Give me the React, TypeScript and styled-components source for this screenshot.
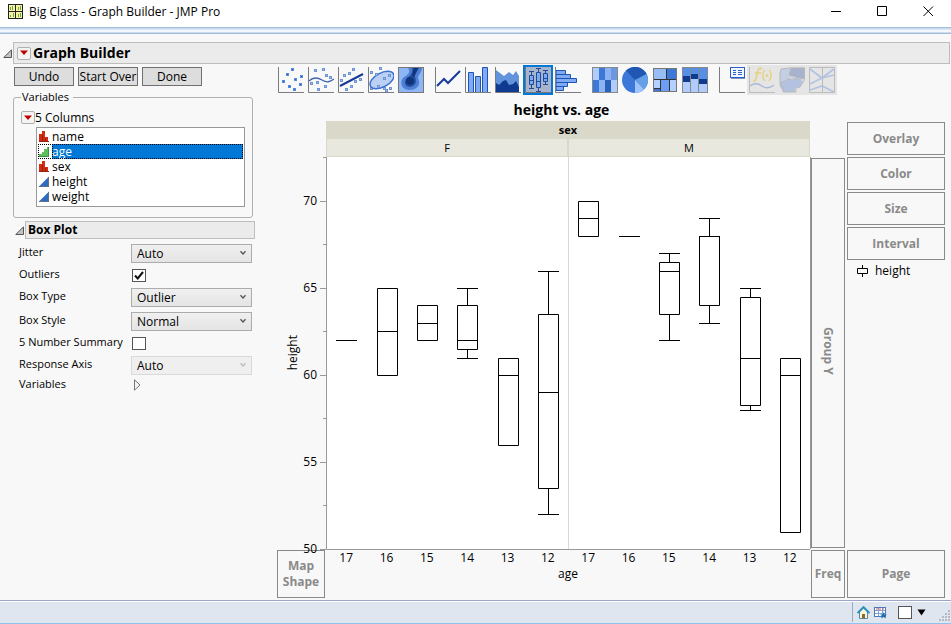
import React from "react";
import styled, { createGlobalStyle, css } from "styled-components";

const Global = createGlobalStyle`
  * { box-sizing: border-box; }
  html, body { margin: 0; padding: 0; }
  body {
    font-family: "Open Sans", "Noto Sans", sans-serif;
    font-size: 12px;
    line-height: 16px;
    color: #000;
    background: #f8f8f8;
  }
  button, select, input { font: inherit; color: inherit; margin: 0; }
  svg { display: block; flex: none; }
`;

const Window = styled.div`
  min-height: 100vh;
  display: flex;
  flex-direction: column;
  background: #f8f8f8;
`;

const TitleBar = styled.header`
  height: 27px;
  flex: none;
  display: flex;
  align-items: center;
  padding: 0 0 4px 8px;
  gap: 6px;
  background: #fff;
`;

const WindowTitle = styled.span`
  flex: 1;
`;

const WindowButtons = styled.div`
  display: flex;
`;

const WindowButton = styled.button`
  width: 46px;
  height: 23px;
  border: 0;
  padding: 0;
  background: none;
  display: flex;
  align-items: center;
  justify-content: center;
`;

const Ribbon = styled.div`
  height: 7px;
  flex: none;
  border-top: 1px solid #a6bbd6;
  border-bottom: 1px solid #a6bbd6;
  background: linear-gradient(#c9dbee 0 1px, #d8e5f3 1px 2px, #f4f8fc 2px 4px, #c9dbee 4px 5px);
`;

const Content = styled.main`
  flex: 1;
  display: flex;
  flex-direction: column;
  padding-top: 8px;
`;

const OutlineRow = styled.div<{ $nested?: boolean }>`
  display: flex;
  align-items: center;
  gap: 1px;
  margin-left: ${(p) => (p.$nested ? 1 : 3)}px;
  margin-right: ${(p) => (p.$nested ? 0 : 1)}px;
  margin-top: ${(p) => (p.$nested ? 3 : 0)}px;
`;

const Disclosure = styled.button`
  border: 0;
  padding: 0;
  background: none;
  flex: none;
`;

const OutlineBar = styled.div<{ $nested?: boolean }>`
  flex: 1;
  display: flex;
  align-items: center;
  gap: 2px;
  height: ${(p) => (p.$nested ? 18 : 22)}px;
  padding-left: ${(p) => (p.$nested ? 2 : 3)}px;
  border: 1px solid #bdbdbd;
  background: #ebebeb;
`;

const Heading = styled.h1`
  margin: 0;
  font-size: 14px;
  line-height: 20px;
  font-weight: 700;
`;

const SubHeading = styled.h2`
  margin: 0;
  font-size: 12px;
  line-height: 16px;
  font-weight: 700;
`;

const MenuButton = styled.button`
  width: 14px;
  height: 13px;
  flex: none;
  padding: 0;
  border: 1px solid #b0b0b0;
  border-radius: 2px;
  background: #f4f4f4;
  display: flex;
  align-items: center;
  justify-content: center;
`;

const Workspace = styled.div`
  flex: 1;
  display: flex;
  gap: 22px;
  padding: 0 6px 1px 14px;
`;

const ControlPanel = styled.aside`
  width: 241px;
  flex: none;
  padding-top: 3px;
`;

const ButtonRow = styled.div`
  display: flex;
  gap: 4px;
`;

const PushButton = styled.button`
  width: 60px;
  height: 19px;
  padding: 0;
  border: 1px solid #707070;
  background: #dddddd;
  line-height: 17px;
  white-space: nowrap;
`;

const VariablesBox = styled.fieldset`
  margin: 3px 2px 0 -1px;
  padding: 4px 7px 10px;
  border: 1px solid #b0b0b0;
  border-radius: 3px;
  min-width: 0;
`;

const Legend = styled.legend`
  padding: 0 4px 0 1px;
  font-size: 11px;
`;

const ColumnsHeader = styled.div`
  display: flex;
  align-items: center;
  height: 17px;
`;

const ColumnList = styled.ul`
  list-style: none;
  margin: 1px 0 0 15px;
  padding: 1px 1px 2px;
  border: 1px solid #999;
  background: #fff;
`;

const ColumnItem = styled.li<{ $selected?: boolean }>`
  display: flex;
  align-items: center;
  height: 15px;
  line-height: 15px;
  outline: ${(p) => (p.$selected ? "1px dotted #000" : "none")};
  outline-offset: -1px;
`;

const ColumnIcon = styled.span`
  width: 14px;
  flex: none;
  padding-left: 1px;
`;

const ColumnName = styled.span<{ $selected?: boolean }>`
  flex: 1;
  ${(p) =>
    p.$selected &&
    css`
      color: #fff;
      background: #0078d7;
      outline: 1px dotted #000;
      outline-offset: -1px;
    `}
`;

const Options = styled.div`
  display: grid;
  grid-template-columns: 112px 121px;
  grid-template-rows: 24px 20px 24px 24px 20px 24px 16px;
  align-items: center;
  margin-top: 2px;
  padding-left: 5px;
`;

const OptionLabel = styled.label`
  font-size: 11px;
  line-height: 14px;
  padding-bottom: 2px;
  white-space: nowrap;
`;

const SelectWrap = styled.span`
  display: grid;
  align-items: center;
  & > * { grid-area: 1 / 1; }
  & > svg { justify-self: end; margin-right: 5px; pointer-events: none; }
`;

const Dropdown = styled.select`
  appearance: none;
  width: 100%;
  height: 19px;
  padding: 0 5px;
  border: 1px solid #acacac;
  border-radius: 0;
  background: linear-gradient(#f0f0f0, #e4e4e4);
  line-height: 17px;
  &:disabled { border-color: #d9d9d9; background: #efefef; color: #000; opacity: 1; }
`;

const CheckBox = styled.input`
  appearance: none;
  width: 14px;
  height: 13px;
  margin: 0 0 0 1px;
  border: 1px solid #555;
  background: #fff;
  & + svg { visibility: hidden; }
  &:checked + svg { visibility: visible; }
`;

const CheckWrap = styled.span`
  display: grid;
  justify-content: start;
  align-items: center;
  & > * { grid-area: 1 / 1; }
  & > svg { margin-left: 3px; pointer-events: none; }
`;

const GraphArea = styled.section`
  flex: 1;
  min-width: 0;
  display: flex;
  flex-direction: column;
`;

const Palette = styled.div`
  display: flex;
  gap: 7px;
  height: 35px;
  padding-top: 1px;
  margin-left: -1px;
`;

const PaletteGroup = styled.div`
  display: flex;
`;

const Tool = styled.button<{ $active?: boolean }>`
  width: 30px;
  height: 30px;
  padding: 0;
  display: flex;
  align-items: center;
  justify-content: center;
  border: ${(p) => (p.$active ? "2px solid #0078d7" : "0")};
  background: ${(p) => (p.$active ? "#a9b4cc" : "none")};
  &:disabled { background: #e5e5e5; }
`;

const GraphGrid = styled.div`
  flex: 1;
  display: grid;
  grid-template-columns: 49px minmax(0, 1fr) 36px 99px;
  grid-template-rows: 22px 36px minmax(392px, 1fr) 50px;
`;

const GraphTitle = styled.h2`
  grid-area: 1 / 1 / 2 / 4;
  margin: 0;
  font-size: 14px;
  line-height: 22px;
  font-weight: 700;
  text-align: center;
`;

const GroupHeader = styled.div`
  grid-area: 2 / 2 / 3 / 3;
  display: grid;
  grid-template-columns: 1fr 1fr;
  grid-template-rows: 18px 18px;
  text-align: center;
  line-height: 18px;
  font-size: 11px;
  background: #dad8c9;
`;

const GroupName = styled.div`
  grid-column: 1 / 3;
  font-weight: 700;
`;

const GroupLevel = styled.div`
  margin: 0 1px 1px;
  line-height: 17px;
  background: #e8e8df;
`;

const YAxis = styled.div`
  grid-area: 3 / 1 / 4 / 2;
  display: grid;
  grid-template-columns: 9px 14px 17px;
  align-items: center;
  z-index: 1;
`;

const AxisTitle = styled.span<{ $vertical?: boolean }>`
  ${(p) =>
    p.$vertical
      ? css`
          grid-column: 2;
          writing-mode: vertical-rl;
          transform: rotate(180deg);
          line-height: 14px;
          justify-self: center;
        `
      : css`
          grid-column: 1 / -1;
          text-align: center;
        `}
`;

const YTicks = styled.div`
  grid-column: 3;
  height: 100%;
  display: grid;
  grid-template-rows: 5fr 10fr 10fr 10fr 10fr;
  align-items: end;
  justify-items: end;
`;

const YTick = styled.span`
  margin-bottom: -8px;
`;

const Plot = styled.div`
  grid-area: 3 / 2 / 4 / 3;
  contain: size;
  & > svg { width: 100%; height: 100%; overflow: visible; }
`;

const XAxis = styled.div`
  grid-area: 4 / 2 / 5 / 3;
  display: grid;
  grid-template-columns: repeat(12, 1fr);
  grid-template-rows: 16px 16px;
  padding-top: 1px;
  text-align: center;
`;

const DropZone = styled.button<{ $area?: string; $tall?: boolean; $edge?: "left" | "right" }>`
  ${(p) => p.$area && css`grid-area: ${p.$area};`}
  height: ${(p) => (p.$area ? "auto" : "33px")};
  margin: ${(p) => (p.$area ? "1px" : "0 0 2px")};
  ${(p) => p.$edge && `margin-${p.$edge}: 0;`}
  padding: 0;
  border: 1px solid #8a8a8a;
  background: #f8f8f8;
  color: #8a8a8a;
  font-weight: 700;
  & > span { writing-mode: ${(p) => (p.$tall ? "vertical-rl" : "horizontal-tb")}; }
`;

const RightZones = styled.div`
  grid-area: 2 / 4 / 4 / 5;
  display: flex;
  flex-direction: column;
  padding: 1px 0 0 1px;
`;

const LegendItem = styled.div`
  display: flex;
  align-items: center;
  gap: 6px;
  padding: 1px 0 0 10px;
`;

const StatusBar = styled.footer`
  height: 24px;
  flex: none;
  display: flex;
  justify-content: flex-end;
  align-items: center;
  border-top: 1px solid #9aa6cc;
  border-bottom: 1px solid #8fc4f0;
  box-shadow: inset 0 1px #fff;
  background: #dfe6f0;
`;

const StatusTools = styled.div`
  display: flex;
  align-items: center;
  height: 20px;
  padding-left: 4px;
  gap: 4px;
  border-left: 1px solid #9fa9c8;
`;

const IconButton = styled.button`
  border: 0;
  padding: 0;
  background: none;
`;

const StatusCheck = styled(CheckBox)`
  height: 13px;
  margin: 0 1px 0 7px;
`;

const Grip = styled.span`
  align-self: end;
  margin-left: 7px;
`;

/* ---------- icons ---------- */

const Opener = () => (
  <svg width="9" height="9" viewBox="0 0 9 9">
    <path d="M8.5 .8V8.5H.8Z" fill="#c4c4c4" stroke="#555" />
  </svg>
);

const RedTriangle = () => (
  <svg width="10" height="6" viewBox="0 0 10 6">
    <path d="M1 .5H9L5 5Z" fill="#c00000" />
  </svg>
);

const Chevron = ({ color }: { color: string }) => (
  <svg width="8" height="6" viewBox="0 0 8 6">
    <path d="M1.5 1.2L4 4L6.5 1.2" fill="none" stroke={color} strokeWidth="1.3" />
  </svg>
);

const AppIcon = () => (
  <svg width="15" height="15" viewBox="0 0 15 15">
    <rect x=".5" y=".5" width="14" height="14" fill="#f6f3a6" stroke="#222" />
    <path d="M7.5 0V15M0 7.5H15" stroke="#222" />
    <path d="M2.5 3V6M4.5 2V6M10.5 3V6M12.5 2V6M2.5 11V13M5.5 9V13M10.5 10V13M12.5 9V13" stroke="#6aa83c" />
  </svg>
);

const NominalIcon = () => (
  <svg width="11" height="11" viewBox="0 0 11 11">
    <path d="M0 11V3H3V0H6V6H9V11Z" fill="#d42a10" />
    <path d="M3.5 4V11M6.5 7V11M0 10.5H10" stroke="#99200e" />
  </svg>
);

const OrdinalIcon = () => (
  <svg width="11" height="11" viewBox="0 0 11 11">
    <path d="M0 11V8H3V6H5V3H8V1H10V11Z" fill="#5cc05c" />
    <path d="M0 10.5H10M9.5 1V11" stroke="#3a8f42" />
  </svg>
);

const ContinuousIcon = () => (
  <svg width="11" height="11" viewBox="0 0 11 11">
    <path d="M0 10.5L10 .5V10.5Z" fill="#2f6cc0" />
    <path d="M0 10.5H10M9.5 1V11" stroke="#5f6f88" />
  </svg>
);

const AXES = <path d="M.5 0V25.5H26" fill="none" stroke="#7c7c7c" />;

const Points = ({ at, dark }: { at: number[][]; dark?: boolean }) => (
  <>
    {at.map(([x, y], i) => (
      <rect
        key={i}
        x={x - 0.5}
        y={y - 0.5}
        width="2"
        height="2"
        fill={dark ? "#1e5bc6" : "#9dbdf5"}
        stroke={dark ? "#5b8cdc" : "#6f95d6"}
        strokeWidth="1"
      />
    ))}
  </>
);

const toolDrawings: Record<string, React.ReactNode> = {
  Points: (
    <>
      {AXES}
      <Points dark at={[[14, 2], [9, 7], [23, 9], [17, 12], [5, 14], [22, 17], [11, 19], [16, 22]]} />
    </>
  ),
  Smoother: (
    <>
      {AXES}
      <Points at={[[7, 3], [15, 2], [18, 8], [22, 10], [3, 16], [9, 15], [17, 19], [10, 22]]} />
      <path d="M1 14C5 10 9 10 14 13S22 15 26 12" fill="none" stroke="#3d63b4" strokeWidth="1.3" />
    </>
  ),
  "Line of Fit": (
    <>
      {AXES}
      <Points at={[[15, 2], [6, 8], [11, 6], [22, 12], [17, 14], [3, 13], [8, 22], [13, 19]]} />
      <path d="M2 19L25 7" stroke="#153c98" strokeWidth="2" />
    </>
  ),
  Ellipse: (
    <>
      {AXES}
      <Points at={[[12, 1], [3, 5], [22, 21], [16, 21], [3, 21], [18, 23]]} />
      <ellipse cx="14" cy="13" rx="13" ry="7" transform="rotate(-28 14 13)" fill="#b4cbf4" fillOpacity=".9" stroke="#3b70d0" strokeWidth="1.5" />
      <Points at={[[8, 7], [16, 11], [10, 19], [21, 8]]} />
    </>
  ),
  Contour: (
    <>
      <rect x=".5" y=".5" width="25" height="25" fill="#8fb6f4" stroke="#777" />
      <path d="M10 1C13 5 10 8 6 10C1 14 3 23 11 23C20 23 23 17 20 11C20 8 24 5 24 1Z" fill="#4d7fd4" />
      <path d="M14 1C15 6 12 9 9 11C5 15 7 20 12 20C18 19 19 14 17 10C17 6 20 4 21 1Z" fill="#24509f" />
      <circle cx="12" cy="14" r="4" fill="#10347c" />
      <path d="M16 1L14 9L16 10L20 1Z" fill="#10347c" />
    </>
  ),
  Line: (
    <>
      {AXES}
      <path d="M2 19L9 12L13 16L25 4" fill="none" stroke="#153c98" strokeWidth="2" />
    </>
  ),
  Bar: (
    <>
      {AXES}
      <g fill="#80aaf4" stroke="#1d55b4">
        <path d="M3.5 25V5.5H8.5V25M10.5 25V9.5H15.5V25M17.5 25V.5H22.5V25" />
      </g>
    </>
  ),
  Area: (
    <>
      <path d="M1 3L5 6L9 9L14 5L18 8L21 4L24 9V25H1Z" fill="#6294de" />
      <path d="M1 16L4 18L8 14L11 13L14 18L18 17L21 14L24 20V25H1Z" fill="#0f3a90" />
      {AXES}
    </>
  ),
  "Box Plot": (
    <>
      <path d="M.5 0V25.5H26" fill="none" stroke="#777" />
      <g fill="#7fa8ee" stroke="#1c4d9c">
        <path d="M6.5 4V21M4 4.5H9M4 21.5H9M13.5 1V25M11 1.5H16M11 24.5H16M20.5 3V17M18 3.5H23M18 17.5H23" />
        <path d="M4.5 8.5H8.5V17.5H4.5ZM11.5 5.5H15.5V20.5H11.5ZM18.5 6.5H22.5V14.5H18.5Z" />
        <path d="M4 13.5H9M11 14.5H16M18 11.5H23" />
      </g>
    </>
  ),
  Histogram: (
    <>
      <g fill="#80aaf4" stroke="#1d55b4">
        <path d="M1 3.5H10.5V7.5H1ZM1 7.5H15.5V11.5H1ZM1 11.5H21.5V15.5H1ZM1 15.5H12.5V19.5H1ZM1 19.5H8.5V23.5H1Z" />
      </g>
      {AXES}
    </>
  ),
  Heatmap: (
    <>
      <path d="M1 1H7V13H1Z" fill="#b0ccfc" />
      <path d="M7 1H13V13H7Z" fill="#3b78d8" />
      <path d="M13 1H19V13H13Z" fill="#8cb2f2" />
      <path d="M19 1H25V13H19Z" fill="#6c98e0" />
      <path d="M1 13H7V25H1Z" fill="#3b78d8" />
      <path d="M7 13H13V25H7Z" fill="#8cb2f2" />
      <path d="M13 13H19V25H13Z" fill="#2a62ba" />
      <path d="M19 13H25V25H19Z" fill="#b0ccfc" />
      <rect x=".5" y=".5" width="25" height="25" fill="none" stroke="#888" />
    </>
  ),
  Pie: (
    <>
      <circle cx="13" cy="13" r="13" fill="#3b78d8" />
      <path d="M13 13L4 3.6A13 13 0 0 1 24.6 7Z" fill="#1f57b2" />
      <path d="M13 13L24.6 7A13 13 0 0 1 22 22.4Z" fill="#659fe6" />
      <path d="M13 13L22 22.4A13 13 0 0 1 13 26Z" fill="#a0c4fc" />
    </>
  ),
  Treemap: (
    <>
      <rect x="1" y="1" width="24" height="24" fill="#333" />
      <path d="M2 2H14V12H2Z" fill="#98bcf4" />
      <path d="M15 2H24V12H15Z" fill="#3b78d8" />
      <path d="M2 13H8V21H2Z" fill="#b4d0fc" />
      <path d="M2 22H8V24H2Z" fill="#3b78d8" />
      <path d="M9 13H17V24H9Z" fill="#6c9ef6" />
      <path d="M18 13H24V24H18Z" fill="#b4d0fc" />
      <rect x="1.5" y="1.5" width="23" height="23" fill="none" stroke="#777" />
    </>
  ),
  Mosaic: (
    <>
      <path d="M1 1H25V25H1Z" fill="#b0ccfc" />
      <path d="M1 1H8V10H1ZM9 1H16V8H9ZM17 1H25V12H17Z" fill="#5690e6" />
      <path d="M1 9H8V15H1ZM9 7H16V12H9ZM17 12H25V17H17Z" fill="#0f3a90" />
      <path d="M8.5 1V25M16.5 1V25" stroke="#888" />
      <rect x=".5" y=".5" width="25" height="25" fill="none" stroke="#888" />
    </>
  ),
  "Caption Box": (
    <>
      {AXES}
      <rect x="11.5" y=".5" width="14" height="10" fill="#f2f7ff" stroke="#2c60c4" />
      <path d="M14 3.5H17M19 3.5H23M14 5.5H17M19 5.5H23M14 7.5H17M19 7.5H23" stroke="#2c60c4" />
      <path d="M12 11.5H26.5" stroke="#7c93c0" />
    </>
  ),
  Formula: (
    <>
      <path d="M.5 0V25.5H26" fill="none" stroke="#bcbcbc" />
      <path d="M4 14C7 15 7 11 8 7S10 0 13 2M6 6H12" fill="none" stroke="#e5d489" strokeWidth="2" />
      <path d="M16 3C13 6 13 11 16 14M20 3C23 6 23 11 20 14" fill="none" stroke="#e5d489" strokeWidth="1.6" />
      <circle cx="18" cy="8.5" r="1.5" fill="#e5d489" />
      <path d="M1 19C5 16 9 16 13 19S21 21 25 18" fill="none" stroke="#a9b9d8" strokeWidth="1.3" />
    </>
  ),
  "Map Shapes": (
    <>
      <path d="M2 2L12 1L10 12L1 16V6Z" fill="#c3cfe4" />
      <path d="M12 1H25V12L18 11L10 8Z" fill="#a7b3cc" />
      <path d="M1 16L10 12L18 11L24 14L21 20L16 21V25H5L1 20Z" fill="#b2c2e0" />
      <path d="M2 2L12 .8H25.5V13L21 20L17 21V25H4V20L1 18V6ZM12 1L10 8L16 12L24 12M1 16L12 11" fill="none" stroke="#b8b8b8" />
    </>
  ),
  "Parallel Plot": (
    <>
      <path d="M1 2L13 11L25 2M1 17L13 11L25 8M1 23L13 19L25 25" fill="none" stroke="#b3c3e3" strokeWidth="1.8" />
      <path d="M.5 .5H25.5V25.5H.5ZM13.5 0V26" fill="none" stroke="#bcbcbc" />
    </>
  ),
};

const toolGroups: string[][] = [
  ["Points", "Smoother", "Line of Fit", "Ellipse", "Contour"],
  ["Line", "Bar", "Area", "Box Plot", "Histogram"],
  ["Heatmap", "Pie", "Treemap", "Mosaic"],
  ["Caption Box", "Formula", "Map Shapes", "Parallel Plot"],
];
const unavailable = ["Formula", "Map Shapes", "Parallel Plot"];

/* ---------- data ---------- */

const columns = [
  { name: "name", icon: <NominalIcon /> },
  { name: "age", icon: <OrdinalIcon />, selected: true },
  { name: "sex", icon: <NominalIcon /> },
  { name: "height", icon: <ContinuousIcon /> },
  { name: "weight", icon: <ContinuousIcon /> },
];

type Box = { low: number; q1: number; median: number; q3: number; high: number };
const box = (low: number, q1: number, median: number, q3: number, high: number): Box => ({ low, q1, median, q3, high });

const boxes: Box[] = [
  box(62, 62, 62, 62, 62),
  box(60, 60, 62.5, 65, 65),
  box(62, 62, 63, 64, 64),
  box(61, 61.5, 62, 64, 65),
  box(56, 56, 60, 61, 61),
  box(52, 53.5, 59, 63.5, 66),
  box(68, 68, 69, 70, 70),
  box(68, 68, 68, 68, 68),
  box(62, 63.5, 66, 66.5, 67),
  box(63, 64, 68, 68, 69),
  box(58, 58.25, 61, 64.5, 65),
  box(51, 51, 60, 61, 61),
];
const ages = [17, 16, 15, 14, 13, 12];

const PLOT_W = 484;
const PLOT_H = 392;
const yPos = (v: number) => Math.floor(392.4 - (v - 50) * 17.4) + 0.5;
const xPos = (i: number) => Math.round(((i + 0.5) * PLOT_W) / 12) + 0.5;

const BoxPlotChart = () => (
  <svg viewBox={`0 0 ${PLOT_W} ${PLOT_H}`} preserveAspectRatio="none" role="img" aria-label="Box plots of height by age and sex">
    <rect width={PLOT_W} height={PLOT_H} fill="#fff" />
    <path d={`M242.5 0V${PLOT_H}`} stroke="#d8d8d8" />
    <path d={`M.5 0V392.5H${PLOT_W}`} fill="none" stroke="#999" />
    <path d={`M${PLOT_W + 0.5} 0V${PLOT_H}`} stroke="#999" />
    {[50, 55, 60, 65, 70].map((v) => (
      <path key={v} d={`M-6 ${yPos(v)}H0`} stroke="#999" />
    ))}
    {[52.5, 57.5, 62.5, 67.5, 72.5].map((v) => (
      <path key={v} d={`M-3 ${Math.max(yPos(v), 0.5)}H0`} stroke="#999" />
    ))}
    <g fill="none" stroke="#000">
      {boxes.map((b, i) => {
        const x = xPos(i);
        const l = x - 10;
        const r = x + 10;
        return (
          <g key={i}>
            {b.q3 > b.q1 && <path d={`M${l} ${yPos(b.q3)}H${r}V${yPos(b.q1)}H${l}Z`} />}
            <path d={`M${l - 0.5} ${yPos(b.median)}H${r + 0.5}`} />
            {b.high > b.q3 && <path d={`M${x} ${yPos(b.q3)}V${yPos(b.high)}M${l - 0.5} ${yPos(b.high)}H${r + 0.5}`} />}
            {b.low < b.q1 && <path d={`M${x} ${yPos(b.q1)}V${yPos(b.low)}M${l - 0.5} ${yPos(b.low)}H${r + 0.5}`} />}
          </g>
        );
      })}
    </g>
  </svg>
);

const SelectOption = ({ id, label, value, disabled }: { id: string; label: string; value: string; disabled?: boolean }) => (
  <>
    <OptionLabel htmlFor={id}>{label}</OptionLabel>
    <SelectWrap>
      <Dropdown id={id} disabled={disabled} defaultValue={value}>
        <option>{value}</option>
      </Dropdown>
      <Chevron color={disabled ? "#bbb" : "#555"} />
    </SelectWrap>
  </>
);

const CheckOption = ({ id, label, checked }: { id: string; label: string; checked?: boolean }) => (
  <>
    <OptionLabel htmlFor={id}>{label}</OptionLabel>
    <CheckWrap>
      <CheckBox id={id} type="checkbox" defaultChecked={checked} />
      <svg width="10" height="9" viewBox="0 0 10 9">
        <path d="M1 4.5L3.7 7.5L9 1" fill="none" stroke="#111" strokeWidth="2" />
      </svg>
    </CheckWrap>
  </>
);

export default function App() {
  return (
    <Window>
      <Global />
      <TitleBar>
        <AppIcon />
        <WindowTitle>Big Class - Graph Builder - JMP Pro</WindowTitle>
        <WindowButtons>
          <WindowButton aria-label="Minimize">
            <svg width="11" height="11" viewBox="0 0 11 11"><path d="M0 5.5H10" stroke="#000" /></svg>
          </WindowButton>
          <WindowButton aria-label="Maximize">
            <svg width="11" height="11" viewBox="0 0 11 11"><path d="M.5 .5H9.5V9.5H.5Z" fill="none" stroke="#000" /></svg>
          </WindowButton>
          <WindowButton aria-label="Close">
            <svg width="11" height="11" viewBox="0 0 11 11"><path d="M.5 .5L10 10M10 .5L.5 10" stroke="#000" /></svg>
          </WindowButton>
        </WindowButtons>
      </TitleBar>
      <Ribbon />
      <Content>
        <OutlineRow>
          <Disclosure aria-label="Collapse Graph Builder"><Opener /></Disclosure>
          <OutlineBar>
            <MenuButton aria-label="Graph Builder menu"><RedTriangle /></MenuButton>
            <Heading>Graph Builder</Heading>
          </OutlineBar>
        </OutlineRow>
        <Workspace>
          <ControlPanel>
            <ButtonRow>
              <PushButton>Undo</PushButton>
              <PushButton>Start Over</PushButton>
              <PushButton>Done</PushButton>
            </ButtonRow>
            <VariablesBox>
              <Legend>Variables</Legend>
              <ColumnsHeader>
                <MenuButton aria-label="Columns menu"><RedTriangle /></MenuButton>
                <span>5 Columns</span>
              </ColumnsHeader>
              <ColumnList role="listbox" aria-label="Columns">
                {columns.map((c) => (
                  <ColumnItem key={c.name} role="option" aria-selected={!!c.selected} $selected={c.selected}>
                    <ColumnIcon>{c.icon}</ColumnIcon>
                    <ColumnName $selected={c.selected}>{c.name}</ColumnName>
                  </ColumnItem>
                ))}
              </ColumnList>
            </VariablesBox>
            <OutlineRow $nested>
              <Disclosure aria-label="Collapse Box Plot"><Opener /></Disclosure>
              <OutlineBar $nested>
                <SubHeading>Box Plot</SubHeading>
              </OutlineBar>
            </OutlineRow>
            <Options>
              <SelectOption id="jitter" label="Jitter" value="Auto" />
              <CheckOption id="outliers" label="Outliers" checked />
              <SelectOption id="box-type" label="Box Type" value="Outlier" />
              <SelectOption id="box-style" label="Box Style" value="Normal" />
              <CheckOption id="summary" label="5 Number Summary" />
              <SelectOption id="response-axis" label="Response Axis" value="Auto" disabled />
              <OptionLabel htmlFor="variables">Variables</OptionLabel>
              <Disclosure id="variables" aria-label="Expand Variables">
                <svg width="12" height="12" viewBox="0 0 12 12">
                  <path d="M3.5 .8V11.2L9 6Z" fill="#f4f4f4" stroke="#777" />
                </svg>
              </Disclosure>
            </Options>
          </ControlPanel>
          <GraphArea>
            <Palette role="toolbar" aria-label="Elements">
              {toolGroups.map((group) => (
                <PaletteGroup key={group[0]}>
                  {group.map((name) => (
                    <Tool key={name} aria-label={name} $active={name === "Box Plot"} disabled={unavailable.includes(name)}>
                      <svg width="26" height="26" viewBox="0 0 26 26">{toolDrawings[name]}</svg>
                    </Tool>
                  ))}
                </PaletteGroup>
              ))}
            </Palette>
            <GraphGrid>
              <GraphTitle>height vs. age</GraphTitle>
              <GroupHeader>
                <GroupName>sex</GroupName>
                <GroupLevel>F</GroupLevel>
                <GroupLevel>M</GroupLevel>
              </GroupHeader>
              <YAxis>
                <AxisTitle $vertical>height</AxisTitle>
                <YTicks>
                  {[70, 65, 60, 55, 50].map((v) => (
                    <YTick key={v}>{v}</YTick>
                  ))}
                </YTicks>
              </YAxis>
              <Plot><BoxPlotChart /></Plot>
              <DropZone $area="3 / 3 / 4 / 4" $tall><span>Group Y</span></DropZone>
              <RightZones>
                <DropZone>Overlay</DropZone>
                <DropZone>Color</DropZone>
                <DropZone>Size</DropZone>
                <DropZone>Interval</DropZone>
                <LegendItem>
                  <svg width="12" height="12" viewBox="0 0 12 12">
                    <path d="M.5 3.5H10.5V8.5H.5ZM5.5 0V3.5M5.5 8.5V12" fill="none" stroke="#000" />
                  </svg>
                  <span>height</span>
                </LegendItem>
              </RightZones>
              <DropZone $area="4 / 1 / 5 / 2" $edge="left">Map<br />Shape</DropZone>
              <XAxis>
                {[...ages, ...ages].map((a, i) => (
                  <span key={i}>{a}</span>
                ))}
                <AxisTitle>age</AxisTitle>
              </XAxis>
              <DropZone $area="4 / 3 / 5 / 4">Freq</DropZone>
              <DropZone $area="4 / 4 / 5 / 5" $edge="right">Page</DropZone>
            </GraphGrid>
          </GraphArea>
        </Workspace>
      </Content>
      <StatusBar>
        <StatusTools>
          <IconButton aria-label="Home window">
            <svg width="13" height="13" viewBox="0 0 13 13">
              <path d="M2.5 6V12.5H10.5V6L6.5 2Z" fill="#fdf6d8" stroke="#4a8fae" />
              <path d="M.5 7L6.5 1L12.5 7" fill="none" stroke="#2a8fbd" strokeWidth="1.8" />
              <path d="M5 8H8V12.5H5Z" fill="#8c6a2a" />
            </svg>
          </IconButton>
          <IconButton aria-label="Data table">
            <svg width="13" height="13" viewBox="0 0 13 13">
              <rect x=".5" y="1.5" width="11" height="9" fill="#fff" stroke="#4c79b8" />
              <path d="M1 4.5H11M1 7.5H11M4.5 2V10M8.5 2V10" stroke="#7fa3d4" />
              <path d="M2 3H11" stroke="#d05a5a" strokeDasharray="2 1" />
              <path d="M9.5 6L10.5 8.5H13L11 10L12 12.5L9.5 11L7 12.5L8 10L6 8.5H8.5Z" fill="#1f6cae" />
            </svg>
          </IconButton>
          <StatusCheck type="checkbox" aria-label="Select window" />
          <IconButton aria-label="Window menu">
            <svg width="10" height="7" viewBox="0 0 10 7"><path d="M.5 .5H8.5L4.5 6.5Z" fill="#000" /></svg>
          </IconButton>
          <Grip>
            <svg width="13" height="13" viewBox="0 0 13 13">
              {[[10, 1], [10, 4], [7, 4], [10, 7], [7, 7], [4, 7], [10, 10], [7, 10], [4, 10], [1, 10]].map(([x, y]) => (
                <rect key={`${x}-${y}`} x={x} y={y} width="2" height="2" fill="#b4bccb" />
              ))}
            </svg>
          </Grip>
        </StatusTools>
      </StatusBar>
    </Window>
  );
}
